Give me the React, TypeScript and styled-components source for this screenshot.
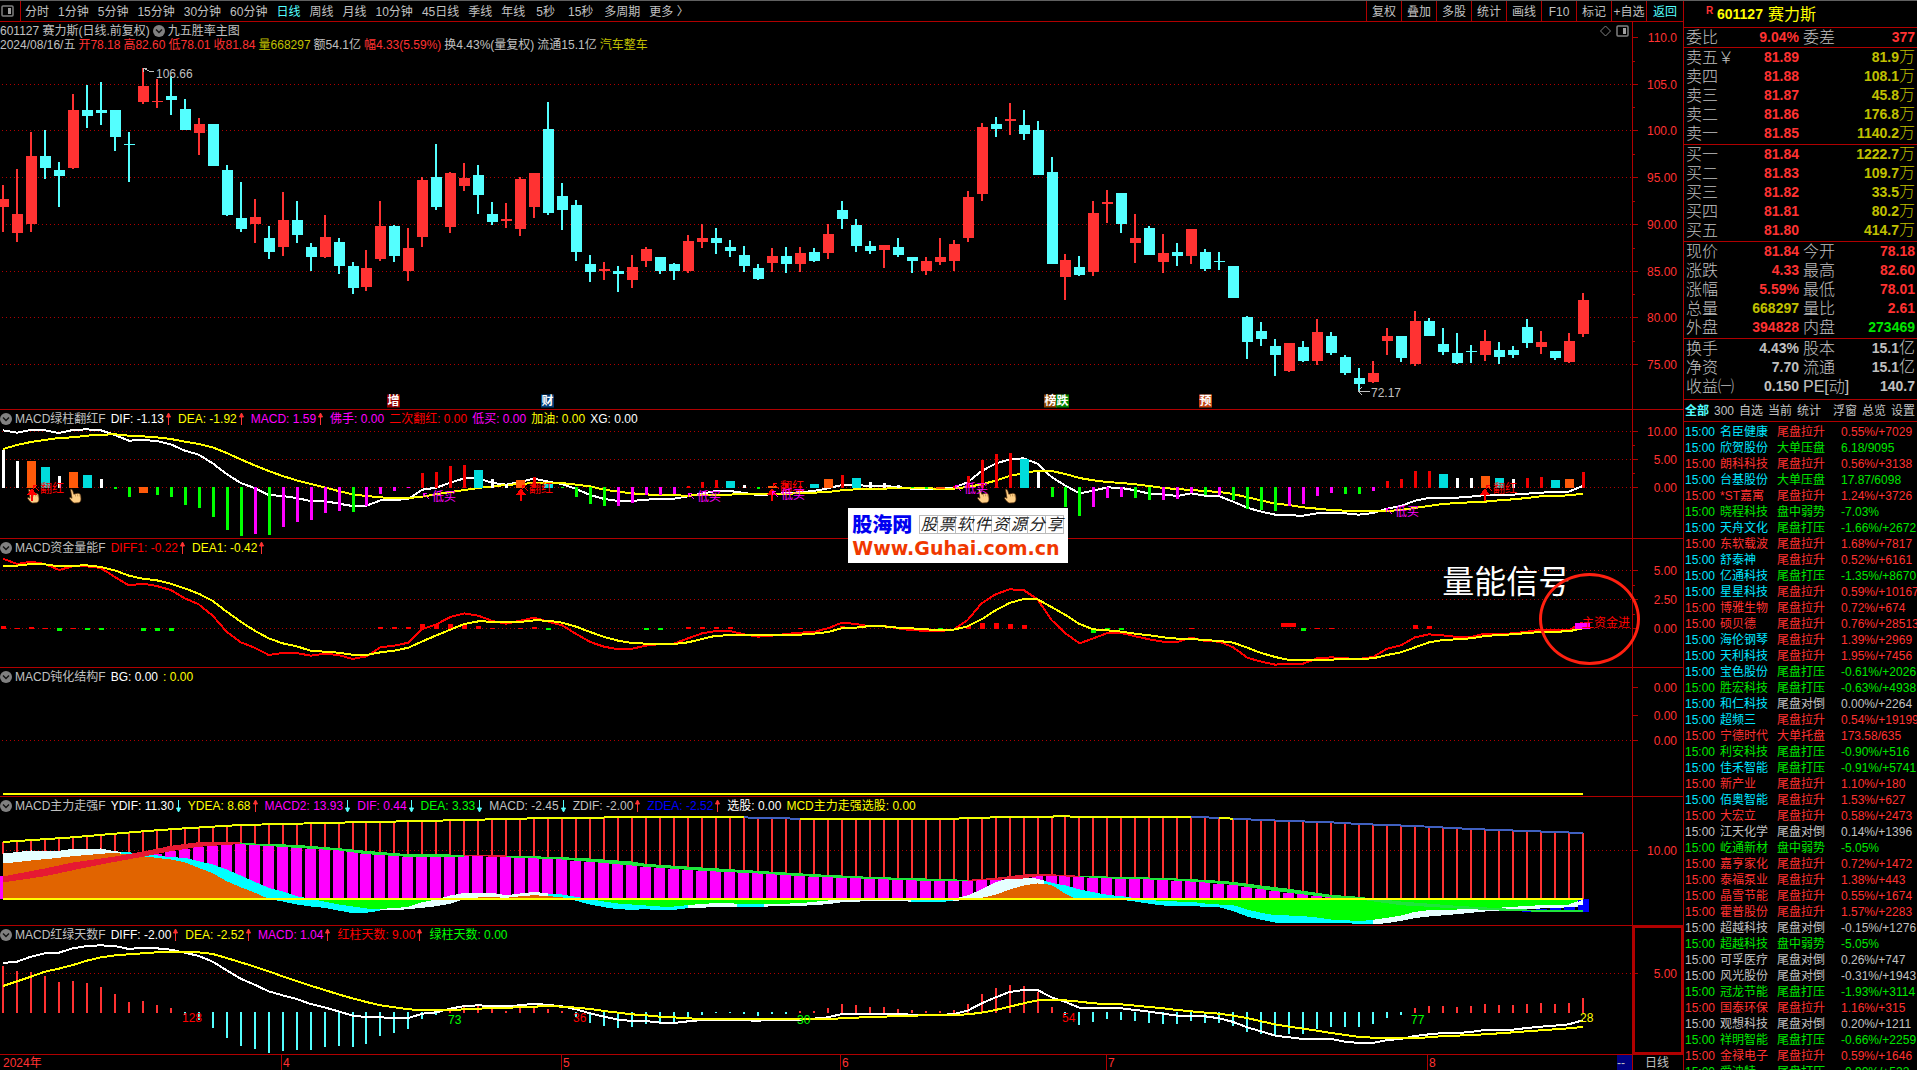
import React from 'react';
import styled, { createGlobalStyle, css } from 'styled-components';

const C = {
  line: '#b00000',
  red: '#ff3232',
  pure: '#ff0000',
  cyan: '#54ffff',
  sky: '#00e6ff',
  gray: '#c0c0c0',
  white: '#ffffff',
  yellow: '#ffff00',
  gold: '#c0c000',
  magenta: '#ff00ff',
  green: '#00ff00',
  leaf: '#00e600',
};

const sans = '"Liberation Sans", "Noto Sans CJK SC", sans-serif';

const GlobalStyle = createGlobalStyle`
  * { box-sizing: border-box; }
  body { margin: 0; background: #000; }
  button { font: inherit; color: inherit; background: none; border: 0; padding: 0; cursor: pointer; }
  table { border-collapse: collapse; border-spacing: 0; }
  td, th { padding: 0; font-weight: 400; text-align: left; }
`;

/* ---------- layout ---------- */

const Page = styled.div`
  display: flex;
  height: 100vh;
  overflow: hidden;
  border-top: 1px solid #606060;
  background: #000;
  color: ${C.gray};
  font: 12px/14px ${sans};
  white-space: nowrap;
`;
const Main = styled.main`
  flex: 1;
  min-width: 0;
  display: flex;
  flex-direction: column;
`;
const Stage = styled.div`
  position: relative;
  flex: 1;
  min-height: 0;
  display: flex;
  flex-direction: column;
`;
const Side = styled.aside`
  width: 234px;
  border-left: 1px solid ${C.line};
  display: flex;
  flex-direction: column;
  overflow: hidden;
`;

/* ---------- toolbar ---------- */

const Toolbar = styled.nav`
  height: 21px;
  flex: none;
  display: flex;
  justify-content: space-between;
  border-bottom: 1px solid ${C.line};
`;
const LayoutButton = styled.button`
  width: 21px;
  display: flex;
  align-items: center;
  padding-left: 1px;
  border-right: 1px solid ${C.line};
`;
const Periods = styled.div`
  display: flex;
  align-items: stretch;
`;
const PeriodList = styled.div`
  display: flex;
  gap: 9px;
  padding-left: 4px;
`;
const Period = styled.button<{ $active?: boolean; $pad?: boolean }>`
  padding: 1px ${(p) => (p.$pad ? 2 : 0)}px 0;
  ${(p) => p.$active && css`color: ${C.cyan};`}
`;
const Tools = styled.div`
  display: flex;
`;
const Tool = styled.button<{ $active?: boolean }>`
  width: ${(p) => (p.$active ? 37 : 35)}px;
  padding-top: 1px;
  border-left: 1px solid ${C.line};
  ${(p) => p.$active && css`color: ${C.cyan};`}
`;

/* ---------- chart panels ---------- */

const PanelBox = styled.section<{ $grow: number }>`
  flex: ${(p) => p.$grow} 1 0;
  min-height: 0;
  display: flex;
  border-bottom: 1px solid ${C.line};
`;
const PlotColumn = styled.div`
  flex: 1;
  min-width: 0;
  display: flex;
  flex-direction: column;
`;
const PanelHeader = styled.header`
  height: 17px;
  flex: none;
  display: flex;
  align-items: center;
  gap: 5px;
  overflow: hidden;
`;
const Title = styled.h2`
  margin: 0;
  display: flex;
  align-items: center;
  gap: 3px;
  font-size: 12px;
  font-weight: 400;
`;
const MainHeader = styled.header`
  height: 30px;
  flex: none;
  padding-top: 2px;
`;
const HeaderLine = styled.div`
  display: flex;
  align-items: center;
  height: 14px;
  gap: 3px;
`;
const HeaderTools = styled.div`
  margin-left: auto;
  display: flex;
  gap: 4px;
  padding-right: 3px;
`;
const Tint = styled.span<{ $c: string }>`
  color: ${(p) => p.$c};
`;
const Reading = styled.span<{ $c: string }>`
  display: flex;
  align-items: center;
  color: ${(p) => p.$c};
`;
const Plot = styled.div`
  position: relative;
  flex: 1;
  min-height: 0;
  overflow: hidden;
`;
const Canvas = styled.svg`
  display: block;
  width: 100%;
  height: 100%;
  shape-rendering: crispEdges;
`;
const Axis = styled.div<{ $active?: boolean }>`
  position: relative;
  width: 51px;
  border-left: 1px solid ${C.line};
  ${(p) => p.$active && css`box-shadow: inset 0 0 0 2px ${C.line};`}
`;
const AxisLabel = styled.span`
  position: absolute;
  right: 6px;
  transform: translateY(-50%);
  color: ${C.red};
`;
const Pin = styled.span<{ $c: string; $bg?: string }>`
  position: absolute;
  transform: translateY(-50%);
  color: ${(p) => p.$c};
  ${(p) =>
    p.$bg &&
    css`
      width: 13px;
      text-align: center;
      line-height: 13px;
      font-weight: 700;
      background: ${p.$bg};
    `}
`;

/* ---------- time axis ---------- */

const TimeBar = styled.footer`
  height: 15px;
  flex: none;
  display: flex;
`;
const Months = styled.div`
  position: relative;
  flex: 1;
  color: ${C.red};
`;
const Month = styled.span<{ $first?: boolean }>`
  position: absolute;
  top: 0;
  height: 15px;
  line-height: 17px;
  padding-left: ${(p) => (p.$first ? 3 : 1)}px;
  border-left: ${(p) => (p.$first ? 0 : 1)}px solid ${C.line};
`;
const Collapse = styled.button`
  width: 15px;
  background: #000080;
  text-align: left;
`;
const Scale = styled.div`
  width: 51px;
  border-left: 1px solid ${C.line};
  padding-left: 12px;
  line-height: 17px;
`;

/* ---------- overlays ---------- */

const Watermark = styled.div`
  position: absolute;
  left: 50.4%;
  top: 47%;
  width: 220px;
  height: 55px;
  padding: 5px 4px 0 4px;
  background: #fff;
`;
const MarkTop = styled.div`
  display: flex;
  align-items: center;
  gap: 7px;
  height: 24px;
`;
const MarkName = styled.strong`
  color: #0000f0;
  font-size: 20px;
  font-weight: 900;
  line-height: 24px;
`;
const Cells = styled.span`
  display: flex;
  border: 1px solid #bbb;
  border-right: 0;
`;
const Cell = styled.i`
  width: 18px;
  height: 17px;
  border-right: 1px solid #bbb;
  color: #222;
  font-size: 16px;
  line-height: 17px;
  text-align: center;
`;
const MarkUrl = styled.div`
  color: #f03800;
  font: bold 19px/22px "DejaVu Sans", sans-serif;
`;
const Note = styled.div`
  position: absolute;
  left: 85.7%;
  top: 54.2%;
  transform: translateY(-50%);
  color: #fff;
  font-size: 32px;
  line-height: 36px;
`;
const Ring = styled.div`
  position: absolute;
  left: 91.45%;
  top: 53.3%;
  width: 101px;
  height: 92px;
  border: 3px solid #ff2010;
  border-radius: 50%;
`;

/* ---------- quote panel ---------- */

const Symbol = styled.h1`
  margin: 0;
  height: 26px;
  flex: none;
  display: flex;
  align-items: center;
  padding: 1px 0 0 22px;
  color: ${C.yellow};
  font-size: 16px;
  font-weight: 400;
  line-height: 25px;
`;
const Flag = styled.sup`
  width: 11px;
  color: ${C.red};
  font-size: 10px;
  font-weight: 700;
  line-height: 10px;
  align-self: flex-start;
  padding-top: 4px;
`;
const Code = styled.b`
  font-size: 14px;
  margin-right: 5px;
`;
const Block = styled.div<{ $h: number }>`
  height: ${(p) => p.$h}px;
  flex: none;
  border-top: 1px solid ${C.line};
`;
const Quote = styled.table`
  width: 100%;
  table-layout: fixed;
  font-size: 16px;
  line-height: 19px;
  tr { height: 19px; }
`;
const Key = styled.th`
  padding-left: 2px;
  font-weight: 300;
`;
const Num = styled.td<{ $c: string }>`
  padding-right: 2px;
  text-align: right;
  color: ${(p) => p.$c};
  font-size: 14px;
  font-weight: 700;
  line-height: 17px;
`;
const Unit = styled.span`
  font-size: 16px;
  font-weight: 300;
  line-height: 1px;
`;
const Tabs = styled.div`
  height: 23px;
  flex: none;
  display: flex;
  gap: 5px;
  padding: 0 2px 0 1px;
  border-top: 1px solid ${C.line};
  border-bottom: 1px solid ${C.line};
`;
const Tab = styled.button<{ $active?: boolean; $gap?: boolean }>`
  ${(p) => p.$active && css`color: ${C.cyan}; font-weight: 700;`}
  ${(p) => p.$gap && css`margin-left: auto;`}
`;
const Feed = styled.div`
  flex: 1;
  min-height: 0;
  overflow: hidden;
  padding-top: 2px;
`;
const FeedTable = styled.table`
  width: 100%;
  table-layout: fixed;
  line-height: 16px;
  tr { height: 16px; }
`;
const FeedCell = styled.td<{ $c: string }>`
  padding-left: 1px;
  color: ${(p) => p.$c};
`;

/* ---------- chart data ---------- */

type Pt = [number, number];
const WIDTH = 1632;
const x = (i: number) => 3 + 13.98 * i;
const cx = (i: number) => Math.round(x(i));

// Kind, then high, body top, body bottom, low, in thirds of a pixel.
const candles = `R555 597 621 696|R507 642 699 726|R396 468 672 696|C390 468 504 537|C486 510 528 621|R282 330 504 507|C255 330 348 384|C246 330 339 375|C330 330 411 453|C396 432 435 546|R204 258 306 312|R237 303 306 324|C228 288 300 345|C297 327 390 390|R354 372 399 465|C372 372 498 498|C495 510 645 648|C546 654 687 696|R597 651 672 729|C678 714 756 777|R576 660 741 768|C603 660 705 729|C729 741 771 813|R645 711 771 774|C714 726 798 822|C786 798 864 882|R750 804 861 873|R603 678 777 783|C675 678 768 786|R684 744 813 843|R531 540 711 741|C432 531 621 630|R516 519 681 699|R489 534 558 573|C495 525 585 642|C606 642 666 675|R609 657 663 684|R531 537 687 708|R519 519 621 654|C306 387 639 645|C549 588 630 690|C600 615 756 783|C765 792 816 846|R786 807 813 840|C798 813 822 876|R765 801 840 864|R741 747 783 801|C771 771 813 822|C789 792 813 840|R705 723 813 819|R672 714 726 744|C684 714 729 762|C720 741 753 771|C738 765 798 816|C792 804 837 840|R744 768 789 816|C741 768 792 819|R741 759 792 816|C744 756 783 786|R672 702 759 777|C603 630 657 687|C657 675 738 756|C723 738 753 762|R735 735 750 804|C714 741 765 771|C771 771 783 819|R771 783 813 825|R714 771 786 795|R720 732 783 813|R573 591 714 726|R369 381 582 603|C351 372 387 411|R309 357 363 405|C330 375 402 420|C363 390 525 525|C471 516 792 792|R762 780 831 900|C768 801 825 828|R603 639 816 828|R570 606 612 669|C579 579 672 699|R642 714 729 789|C678 684 765 765|R702 759 786 819|C729 756 768 798|R687 687 768 792|C747 756 807 813|C756 783 786 810|C798 798 894 894|C948 951 1026 1077|C966 993 1017 1038|C1017 1038 1065 1128|R1029 1029 1113 1116|C1023 1041 1083 1086|R957 996 1083 1095|C996 1008 1059 1065|C1065 1071 1119 1125|C1104 1134 1152 1173|R1083 1119 1146 1149|R984 1008 1023 1065|C1008 1008 1074 1086|R933 963 1092 1098|C954 963 1008 1008|C984 1032 1056 1065|C999 1059 1089 1092|C1035 1053 1057 1089|R990 1023 1065 1083|C1026 1050 1071 1092|C1038 1050 1065 1074|C957 981 1029 1044|R993 1026 1041 1062|C1053 1053 1074 1080|R999 1023 1086 1089|R879 900 1002 1011`
  .split('|')
  .map((s) => ({ up: s[0] === 'R', v: s.slice(1).split(' ').map((n) => Math.round(+n / 3)) }));

const nums = (s: string) => s.trim().split(/\s+/).map(Number);
const pts = (s: string): Pt[] => s.trim().split(/\s+/).map((p) => p.split(':').map(Number) as Pt);

// Histogram of the first MACD panel: kind letter and the bar's far end.
const hist2 = 'W135 W168 O168 A186 W213 O201 A210 W222 G255 G279 O267 G273 G279 G303 G312 G339 G378 G396 M390 G393 M369 M354 M348 M327 M321 G324 M306 M270 M261 M252 R204 R201 R183 R180 A195 W222 W237 O225 R216 A237 G250 G279 G300 G306 M306 M297 M273 M273 M270 R243 R231 R225 A228 W240 G255 O243 R235 R243 A237 O222 R210 A219 W231 W234 W241 G250 G255 O255 R243 R213 R165 R147 R144 A162 W200 G279 G309 G336 M309 M282 M279 G282 G288 M288 M285 M267 G273 M273 G288 G315 G318 G321 M306 M300 M276 M267 G270 G270 M261 R228 R222 R198 R198 A207 W219 W219 O213 A219 W222 R219 R216 A225 O222 R201'
  .split(' ')
  .map((s) => ({ k: s[0], v: +s.slice(1) }));
const kindColor: Record<string, string> = { W: '#ffffff', O: '#ff5a0a', A: '#00dcdc', G: C.green, M: C.magenta, R: '#f00000' };

const dif2 = nums('76 83 75 76 84 75 73 76 90 107 105 108 118 137 149 175 207 234 249 270 273 279 288 288 296 303 302 286 285 282 254 248 233 220 220 234 239 230 221 230 237 252 270 282 288 288 284 282 281 274 266 258 258 264 270 268 264 262 258 250 240 240 243 243 246 251 252 251 248 232 198 176 163 160 176 216 242 265 257 247 249 256 266 268 273 265 272 274 290 308 320 329 331 332 325 324 325 329 324 311 303 287 279 279 278 275 270 270 269 266 263 261 260 243');
const dea2 = nums('132 120 111 105 99 97 92 89 88 92 94 97 102 110 117 127 144 163 181 198 213 226 237 247 258 268 273 277 280 279 275 268 261 255 249 244 240 237 234 234 234 239 244 254 260 265 268 271 271 272 270 269 269 266 266 266 266 265 263 261 256 253 252 251 249 249 249 252 251 246 238 227 213 205 197 198 207 219 226 231 234 238 243 249 252 255 258 261 267 277 286 296 300 307 311 315 317 318 318 318 315 309 303 297 294 292 290 286 283 279 274 273 271 266');
const dif3 = nums('461 477 470 477 495 484 484 489 516 541 536 543 555 580 598 632 680 712 728 750 744 744 752 746 750 762 754 727 722 713 672 658 636 625 632 648 656 647 638 650 661 687 711 725 733 731 722 717 716 700 685 678 678 688 695 692 687 683 681 670 653 657 664 663 670 676 677 678 674 645 595 568 553 555 583 645 685 715 700 684 684 694 703 710 711 698 708 710 727 758 770 779 776 776 760 757 760 762 756 731 721 697 688 691 696 696 686 688 685 680 674 674 676 652');
const dea3 = nums('484 482 477 478 484 482 481 486 496 512 521 526 536 550 566 588 620 650 677 700 715 724 737 740 743 749 750 742 737 728 709 691 674 657 649 650 652 651 646 647 653 665 681 696 707 714 716 717 717 712 702 692 691 690 690 690 690 689 686 681 670 668 663 664 668 670 673 675 674 664 643 616 594 582 583 606 630 657 673 676 680 686 691 697 701 702 705 708 713 728 744 756 765 765 765 764 762 762 760 750 742 727 712 705 703 700 693 690 688 684 681 680 679 670');
const flow3 = 'r0:663 r1:669 r2:666 r3:669 g4:678 r5:669 g6:675 g7:675 g10:678 g11:678 g12:678 r27:666 r28:666 r29:666 r30:657 r31:657 r32:657 r33:660 r34:663 r35:669 r37:669 r38:666 g39:675 g46:675 g47:675 r49:666 r50:666 r51:666 r52:666 r57:669 r60:663 g67:675 r69:663 r70:654 r71:654 r72:657 r73:660 g78:684 g79:675 g80:675 r85:669 g93:678 r94:669 r95:669 r101:660 r102:663'
  .split(' ')
  .map((s) => {
    const [i, v] = s.slice(1).split(':').map(Number);
    return { up: s[0] === 'r', i, v };
  });

const ydif5 = pts('0:156 5:142 8:131 10:124 13:115 17:105 21:101 25:97 30:93 35:88 40:83 46:82 53:82 54:84 57:86 68:86 71:82 76:79 78:82 86:82 88:86 90:90 92:93 95:97 97:102 101:108 105:117 109:123 113:129');
const deaTop5 = pts('0:260 3:236 5:218 8:200 10:185 12:168 14:157 16:156 17:158 18:161 21:165 24:175 26:183 29:193 32:194 34:195 37:198 40:202 42:206 45:215 46:222 50:233 54:243 58:253 62:261 66:266 69:270 71:264 73:254 74:252 76:255 77:258 80:261 83:264 86:270 88:276 90:287 92:297 95:315 97:321 100:335 104:348 107:355 110:361 113:362');
const deaBot5 = pts('0:277 3:258 5:240 8:215 10:200 12:183 14:170 16:164 17:162 18:165 21:173 24:181 26:192 29:200 32:200 34:198 37:203 40:208 42:215 45:226 46:230 50:242 54:250 58:260 62:266 66:272 69:272 71:269 73:265 74:258 76:259 77:261 80:266 83:269 86:277 88:284 90:297 92:308 95:322 97:328 100:345 104:355 107:361 110:365 113:366');
const upper5 = pts('0:192 2:183 4:184 5:178 7:177 8:185 10:192 12:203 13:205 14:215 15:225 16:240 17:258 18:277 19:295 20:306 21:320 22:328 24:345 25:351 26:357 27:358 28:356 29:352 30:338 31:330 32:318 33:310 35:310 36:317 37:312 38:307 39:312 40:315 41:322 42:329 43:336 44:342 45:345 46:348 47:351 48:351 49:347 50:343 51:341 52:341 53:345 55:344 57:341 58:337 59:333 60:329 64:329 65:330 66:333 67:332 68:328 69:318 70:300 71:278 72:266 73:262 74:268 75:280 76:288 77:300 78:308 79:316 80:320 81:326 82:332 83:334 84:336 85:337 86:342 87:345 88:347 89:360 90:370 91:377 92:378 93:380 94:384 95:390 96:392 97:395 98:391 99:385 100:378 101:367 102:362 104:360 106:357 108:352 110:347 112:345 113:330');
const lower5 = pts('0:219 2:210 4:202 5:197 7:190 8:187 10:197 12:207 13:215 14:232 15:248 16:272 17:290 18:306 19:325 20:333 21:342 22:348 23:352 24:360 25:368 26:367 27:360 28:359 29:356 30:352 31:347 32:340 33:325 34:321 35:320 36:322 37:317 38:314 39:317 40:320 41:331 42:342 43:350 44:356 45:358 46:356 47:360 48:358 49:353 51:350 52:348 53:350 54:350 55:347 57:346 58:344 59:341 60:335 62:332 64:331 66:336 68:332 69:327 70:322 71:313 72:297 73:285 74:279 75:283 76:310 77:330 79:328 80:328 81:333 82:340 83:345 84:347 85:345 86:350 87:350 88:362 89:378 90:388 91:396 92:399 94:396 95:396 97:400 98:401 99:398 100:391 101:383 102:378 104:371 106:363 108:358 110:354 112:352 113:348');

const hist6 = nums('528 543 546 558 576 573 579 591 612 636 633 645 654 675 690 714 744 768 777 789 783 780 780 771 768 771 762 738 729 717 687 675 654 648 645 654 663 654 648 657 663 680 699 708 714 711 702 702 699 687 675 669 669 672 678 672 672 663 663 654 642 645 651 651 657 660 663 663 660 642 612 594 585 588 606 651 675 705 696 687 690 693 699 702 702 693 699 699 708 726 732 738 731 731 716 711 710 710 701 683 674 654 648 648 651 648 642 645 645 642 639 642 639 624');
const diff6 = nums('519 515 500 490 488 475 468 466 468 477 473 475 479 488 498 515 541 566 584 604 616 627 642 652 664 677 681 682 684 684 671 667 656 648 646 648 648 646 641 645 649 658 670 680 689 693 693 698 699 694 690 689 689 691 692 690 690 689 686 682 672 671 671 671 672 674 675 675 672 662 640 622 606 600 600 622 636 653 653 653 655 660 665 671 677 677 679 685 696 712 724 737 742 747 747 747 755 759 759 750 747 738 733 729 729 726 720 720 719 714 710 707 703 691');
const dea6 = nums('588 574 560 545 536 525 512 502 496 493 490 487 486 486 487 492 504 517 530 544 559 573 587 600 613 625 636 646 652 658 660 660 660 658 656 654 653 652 650 648 650 653 657 663 668 673 676 680 682 685 687 687 687 687 687 687 687 687 687 687 685 683 681 680 678 677 676 676 675 673 668 660 650 640 631 629 631 635 640 642 643 647 651 655 660 664 668 671 677 684 694 703 710 716 722 729 735 741 743 744 744 744 742 738 737 735 733 730 727 724 721 718 715 711');

/* ---------- chart helpers ---------- */

const at = (s: Pt[], i: number) => {
  for (let k = 1; k < s.length; k++) {
    if (i <= s[k][0]) {
      const [a, b] = [s[k - 1], s[k]];
      return a[1] + ((b[1] - a[1]) * (i - a[0])) / (b[0] - a[0]);
    }
  }
  return s[s.length - 1][1];
};
const steps = (from: number, to: number) => {
  const out = [from];
  for (let i = from + 0.5; i < to; i += 0.5) out.push(i);
  out.push(to);
  return out;
};
const area = (top: (i: number) => number, bottom: (i: number) => number, base: number, from = 0, to = 113) => {
  const s = steps(from, to);
  const p = (i: number, v: number) => `${x(i).toFixed(1)},${(base + v / 3).toFixed(1)}`;
  return [...s.map((i) => p(i, top(i))), ...s.reverse().map((i) => p(i, bottom(i)))].join(' ');
};
const Curve = ({ data, base, color }: { data: number[]; base: number; color: string }) => (
  <polyline fill="none" stroke={color} strokeWidth={2} points={data.map((v, i) => `${x(i)},${base + v / 3}`).join(' ')} />
);
const Guides = ({ at: ys }: { at: number[] }) => (
  <>
    {ys.map((y) => (
      <line key={y} x1={2} x2={WIDTH} y1={y + 0.5} y2={y + 0.5} stroke={C.line} strokeDasharray="1 3" />
    ))}
  </>
);

interface PanelProps {
  top: number;
  height: number;
  head: number;
  header: React.ReactNode;
  ticks: [number, string][];
  minor?: number[];
  guides?: number[];
  active?: boolean;
  pins?: React.ReactNode;
  children: React.ReactNode;
}
const Panel = ({ top, height, head, header, ticks, minor = [], guides, active, pins, children }: PanelProps) => (
  <PanelBox $grow={height - 1}>
    <PlotColumn>
      {header}
      <Plot>
        <Canvas viewBox={`0 ${top + head} ${WIDTH} ${height - 1 - head}`} preserveAspectRatio="none">
          <Guides at={guides ?? ticks.map((t) => t[0])} />
          {children}
        </Canvas>
        {pins}
      </Plot>
    </PlotColumn>
    <Axis $active={active}>
      <Canvas viewBox={`0 ${top} 50 ${height - 1}`} preserveAspectRatio="none">
        {ticks.map(([y]) => (
          <rect key={y} x={0} y={y} width={5} height={1} fill={C.line} />
        ))}
        {minor.map((y) => (
          <rect key={y} x={0} y={y} width={2} height={1} fill={C.line} />
        ))}
      </Canvas>
      {ticks.map(([y, label]) => (
        <AxisLabel key={y} style={{ top: `${((y + 1 - top) / (height - 1)) * 100}%` }}>
          {label}
        </AxisLabel>
      ))}
    </Axis>
  </PanelBox>
);

const makePin = (top: number, h: number) =>
  ({ px, py, c, bg, children }: { px: number; py: number; c: string; bg?: string; children: React.ReactNode }) => (
    <Pin $c={c} $bg={bg} style={{ left: `${(px / WIDTH) * 100}%`, top: `${((py - top) / h) * 100}%` }}>
      {children}
    </Pin>
  );
const Pin1 = makePin(52, 357);
const Pin2 = makePin(427, 111);
const Pin3 = makePin(556, 111);
const Pin6 = makePin(943, 111);

/* ---------- icons ---------- */

const Fold = () => (
  <svg width="12" height="12" viewBox="0 0 12 12" aria-hidden>
    <circle cx="6" cy="6" r="6" fill="#808080" />
    <path d="M3 4.5 6 7.5 9 4.5" fill="none" stroke="#111" strokeWidth="1.4" />
  </svg>
);
const Dock = () => (
  <svg width="13" height="12" viewBox="0 0 13 12" aria-hidden>
    <rect x="1" y="1" width="11" height="10" rx="1" fill="none" stroke="#808080" strokeWidth="1.5" />
    <rect x="7" y="3" width="3" height="6" fill="#a0a0a0" />
  </svg>
);
const Diamond = () => (
  <svg width="13" height="12" viewBox="0 0 13 12" aria-hidden>
    <path d="M6.5 1 11.5 6 6.5 11 1.5 6Z" fill="none" stroke="#808080" />
  </svg>
);
const Trend = ({ down }: { down?: boolean }) => (
  <svg width="9" height="14" viewBox="0 0 9 14" aria-hidden>
    {down ? (
      <path d="M4.500 1V9.500M4.500 13 2.500 9H6.500Z" stroke={C.cyan} fill={C.cyan} />
    ) : (
      <path d="M4.500 13V4.500M4.500 1 2.500 5H6.500Z" stroke={C.red} fill={C.red} />
    )}
  </svg>
);
const Hand = ({ hx, hy }: { hx: number; hy: number }) => (
  <g transform={`translate(${hx} ${hy})`} shapeRendering="auto">
    <path
      d="M1.500 0.500C2.800-.300 3.600 1 4 2.500L4.800 5.200 8 4.400C10 4 11.500 5 11.700 6.800L12 10C12 12 11 13.500 9.500 13.800L5.500 14C3.500 13.500 2.500 12 .8 9.800C.2 8.800 1 8 2.200 8.800L3 9.300Z"
      fill="#ffcf86"
      stroke="#5a3410"
      strokeWidth=".7"
    />
    <path d="M6.500 5.500V7.500M8.500 5.300V7.300M10.300 5.800V7.500" stroke="#b07a38" strokeWidth=".6" />
  </g>
);
const Rise = ({ ax }: { ax: number }) => (
  <path d={`M${ax} 488L${ax + 5} 495H${ax + 1}V501H${ax - 1}V495H${ax - 5}Z`} fill={C.pure} />
);
const Pointer = ({ px, py, color }: { px: number; py: number; color: string }) => (
  <path d={`M${px + 4} ${py}H${px}V${py + 4}M${px} ${py}L${px + 6} ${py + 6}`} stroke={color} fill="none" />
);

/* ---------- header readings ---------- */

type R = [string, string, ('u' | 'd')?];
const IndicatorHeader = ({ title, items }: { title: string; items: R[] }) => (
  <PanelHeader>
    <Title>
      <Fold />
      {title}
    </Title>
    {items.map(([text, color, dir]) => (
      <Reading key={text} $c={color}>
        {text}
        {dir && <Trend down={dir === 'd'} />}
      </Reading>
    ))}
  </PanelHeader>
);

const periods = ['分时', '1分钟', '5分钟', '15分钟', '30分钟', '60分钟', '日线', '周线', '月线', '10分钟', '45日线', '季线', '年线', '5秒', '15秒', '多周期', '更多 〉'];
const tools = ['复权', '叠加', '多股', '统计', '画线', 'F10', '标记', '+自选', '返回'];

/* ---------- panels ---------- */

const PricePanel = () => (
  <Panel
    top={22}
    height={388}
    head={30}
    ticks={[[37, '110.0'], [84, '105.0'], [130, '100.0'], [177, '95.00'], [224, '90.00'], [271, '85.00'], [317, '80.00'], [364, '75.00']]}
    minor={[61, 107, 154, 201, 248, 294, 341]}
    guides={[84, 130, 177, 224, 271, 317, 364]}
    header={
      <MainHeader>
        <HeaderLine>
          <span>601127 赛力斯(日线.前复权)</span>
          <Fold />
          <span>九五胜率主图</span>
          <HeaderTools>
            <Diamond />
            <Dock />
          </HeaderTools>
        </HeaderLine>
        <HeaderLine>
          <span>2024/08/16/五</span>
          <Tint $c={C.red}>开78.18</Tint>
          <Tint $c={C.red}>高82.60</Tint>
          <Tint $c={C.red}>低78.01</Tint>
          <Tint $c={C.red}>收81.84</Tint>
          <Tint $c={C.gold}>量668297</Tint>
          <span>额54.1亿</span>
          <Tint $c={C.red}>幅4.33(5.59%)</Tint>
          <span>换4.43%(量复权)</span>
          <span>流通15.1亿</span>
          <Tint $c={C.gold}>汽车整车</Tint>
        </HeaderLine>
      </MainHeader>
    }
    pins={
      <>
        <Pin1 px={156} py={74} c={C.gray}>106.66</Pin1>
        <Pin1 px={1371} py={393} c={C.gray}>72.17</Pin1>
        <Pin1 px={387} py={401} c="#fff" bg="#900000">增</Pin1>
        <Pin1 px={541} py={401} c="#fff" bg="#003c78">财</Pin1>
        <Pin1 px={1044} py={401} c="#fff" bg="#884400">榜</Pin1>
        <Pin1 px={1056} py={401} c="#fff" bg="#008000">跌</Pin1>
        <Pin1 px={1199} py={401} c="#fff" bg="#c04010">预</Pin1>
      </>
    }
  >
    {candles.map(({ up, v: [hi, t, b, lo] }, i) => (
      <g key={i} fill={up ? C.red : C.cyan}>
        <rect x={cx(i) - 1} y={hi} width={2} height={lo - hi} />
        <rect x={cx(i) - 5} y={t} width={11} height={Math.max(1, b - t)} />
      </g>
    ))}
    <path d="M147 68H143V72M143 68 149 71H154" stroke={C.gray} fill="none" />
    <path d="M1370 391H1358M1362 387 1358 391 1362 395" stroke={C.gray} fill="none" />
  </Panel>
);

const RED_TAGS: Pt[] = [[40, 489], [529, 489], [780, 487], [1493, 489]];
const BUY_TAGS: Pt[] = [[432, 497], [697, 497], [781, 495], [964, 489], [1395, 512]];

const TurnPanel = () => (
  <Panel
    top={410}
    height={129}
    head={17}
    ticks={[[431, '10.00'], [459, '5.00'], [487, '0.00']]}
    minor={[445, 473]}
    header={
      <IndicatorHeader
        title="MACD绿柱翻红F"
        items={[['DIF: -1.13', C.white, 'u'], ['DEA: -1.92', C.yellow, 'u'], ['MACD: 1.59', C.magenta, 'u'], ['佛手: 0.00', C.magenta], ['二次翻红: 0.00', C.pure], ['低买: 0.00', C.magenta], ['加油: 0.00', C.yellow], ['XG: 0.00', C.white]]}
      />
    }
    pins={
      <>
        {RED_TAGS.map(([a, b]) => <Pin2 key={a} px={a} py={b} c={C.pure}>翻红</Pin2>)}
        {BUY_TAGS.map(([a, b]) => <Pin2 key={a} px={a} py={b} c={C.magenta}>低买</Pin2>)}
      </>
    }
  >
    <Curve data={dif2} base={405} color={C.white} />
    <Curve data={dea2} base={405} color={C.yellow} />
    {hist2.map(({ k, v }, i) => {
      const w = k === 'O' || k === 'A' ? 9 : 3;
      const y = 405 + Math.round(v / 3);
      return <rect key={i} x={cx(i) - (w - 1) / 2} y={Math.min(y, 487)} width={w} height={Math.max(1, Math.abs(488 - y))} fill={kindColor[k]} />;
    })}
    {[27, 69, 977, 1004].map((hx) => <Hand key={hx} hx={hx} hy={489} />)}
    {[32, 521, 772, 1485].map((ax) => <Rise key={ax} ax={ax} />)}
    {RED_TAGS.map(([a, b]) => <Pointer key={a} px={a - 7} py={b - 4} color={C.pure} />)}
    {BUY_TAGS.map(([a, b]) => <Pointer key={a} px={a - 9} py={b - 4} color={C.magenta} />)}
  </Panel>
);

const FundPanel = () => (
  <Panel
    top={539}
    height={129}
    head={17}
    ticks={[[570, '5.00'], [599, '2.50'], [628, '0.00']]}
    minor={[585, 614]}
    header={<IndicatorHeader title="MACD资金量能F" items={[['DIFF1: -0.22', C.pure, 'u'], ['DEA1: -0.42', C.yellow, 'u']]} />}
    pins={<Pin3 px={1582} py={623} c={C.pure}>主资金进</Pin3>}
  >
    {flow3.map(({ up, i, v }) => {
      const y = 405 + Math.round(v / 3);
      return <rect key={i} x={cx(i) - 2} y={up ? y : 628} width={5} height={up ? 629 - y : y - 628} fill={up ? C.pure : C.green} />;
    })}
    <rect x={1281} y={623} width={15} height={4} fill={C.pure} />
    <Curve data={dif3} base={405} color={C.pure} />
    <Curve data={dea3} base={405} color={C.yellow} />
    <rect x={1575} y={623} width={15} height={6} fill={C.magenta} />
  </Panel>
);

const ShapePanel = () => (
  <Panel
    top={668}
    height={129}
    head={17}
    ticks={[[687, '0.00'], [715, '0.00'], [740, '0.00']]}
    guides={[740]}
    header={<IndicatorHeader title="MACD钝化结构F" items={[['BG: 0.00', C.white], [': 0.00', C.yellow]]} />}
  >
    <rect x={3} y={793} width={1580} height={2} fill={C.yellow} />
  </Panel>
);

const ZERO5 = 326;
const deaSegs: [number, number, string][] = [[0, 17, '#e61932'], [17, 33, '#1ee63c'], [33, 36, '#e61932'], [36, 69, '#1ee63c'], [69, 77, '#e61932'], [77, 113, '#1ee63c']];
const difSegs: [number, number, string][] = [[0, 8.5, '#e6ffff'], [8.5, 27, '#00ffff'], [27, 39, '#e6ffff'], [39, 49, '#00ffff'], [49, 52.5, '#e6ffff'], [52.5, 54.5, '#00ffff'], [54.5, 65, '#e6ffff'], [65, 68, '#00ffff'], [68, 74.5, '#e6ffff'], [74.5, 98, '#00ffff'], [98, 113, '#e6ffff']];
const ydifSegs: [number, number, string][] = [[0, 53, '#f0ff00'], [53, 57, '#4060c0'], [57, 85, '#f0ff00'], [85, 87, '#4060c0'], [87, 88, '#f0ff00'], [88, 113, '#4060c0']];
const all = Array.from({ length: 114 }, (_, i) => i);

const TrendPanel = () => {
  const base = 790;
  const Y = (v: number) => Math.round(base + v / 3);
  const up = (i: number) => at(upper5, i);
  const low = (i: number) => at(lower5, i);
  return (
    <Panel
      top={797}
      height={129}
      head={17}
      ticks={[[850, '10.00']]}
      header={
        <IndicatorHeader
          title="MACD主力走强F"
          items={[['YDIF: 11.30', C.white, 'd'], ['YDEA: 8.68', C.yellow, 'u'], ['MACD2: 13.93', C.magenta, 'd'], ['DIF: 0.44', C.magenta, 'd'], ['DEA: 3.33', C.green, 'd'], ['MACD: -2.45', C.gray, 'd'], ['ZDIF: -2.00', C.gray, 'u'], ['ZDEA: -2.52', '#0000ff', 'u'], ['选股: 0.00', C.white], ['MCD主力走强选股: 0.00', C.yellow]]}
        />
      }
    >
      {all.map((i) => {
        const t = Y(at(ydif5, i));
        const b = Y(Math.min(ZERO5, at(deaTop5, i), up(i)));
        return <rect key={i} x={cx(i) - 1} y={t} width={2} height={b - t} fill={C.red} />;
      })}
      <rect x={0} y={876} width={3} height={23} fill={C.magenta} />
      {all.filter((i) => i >= 9 && i <= 95).map((i) => (
        <rect key={i} x={cx(i) - 6} y={Y(at(deaBot5, i))} width={11} height={Math.max(0, Y(ZERO5) - Y(at(deaBot5, i)))} fill={C.magenta} />
      ))}
      <polygon fill="#e16400" points={area((i) => Math.min(ZERO5, low(i)), () => ZERO5, base)} />
      <polygon fill={C.green} points={area(() => ZERO5, (i) => Math.max(ZERO5, up(i)), base)} />
      {difSegs.map(([a, b, c]) => <polygon key={a} fill={c} stroke={c} strokeWidth={1} points={area(up, low, base, a, b)} />)}
      {[360, 357, 355, 350, 327].map((v, k) => {
        const i = 109 + k;
        return <rect key={i} x={cx(i) - 5} y={Y(v)} width={11} height={Y(365) - Y(v)} fill="#0000ff" />;
      })}
      <polygon fill="#e6ffff" points={area(up, (i) => low(i) - 4, base, 108, 113)} />
      {deaSegs.map(([a, b, c]) => (
        <polygon key={a} fill={c} stroke={c} strokeWidth={1} points={area((i) => at(deaTop5, i) + 1, (i) => at(deaBot5, i) - 1, base, a, b)} />
      ))}
      {ydifSegs.map(([a, b, c]) => (
        <polyline key={a} fill="none" stroke={c} strokeWidth={2} points={steps(a, b).map((i) => `${x(i)},${base + at(ydif5, i) / 3}`).join(' ')} />
      ))}
      <rect x={3} y={898} width={1580} height={2} fill={C.yellow} />
    </Panel>
  );
};

const DaysPanel = () => (
  <Panel
    top={926}
    height={129}
    head={17}
    active
    ticks={[[973, '5.00']]}
    header={
      <IndicatorHeader
        title="MACD红绿天数F"
        items={[['DIFF: -2.00', C.white, 'u'], ['DEA: -2.52', C.yellow, 'u'], ['MACD: 1.04', C.magenta, 'u'], ['红柱天数: 9.00', C.pure, 'u'], ['绿柱天数: 0.00', C.green]]}
      />
    }
    pins={
      <>
        <Pin6 px={182} py={1018} c={C.pure}>128</Pin6>
        <Pin6 px={448} py={1020} c={C.green}>73</Pin6>
        <Pin6 px={573} py={1018} c={C.pure}>36</Pin6>
        <Pin6 px={797} py={1020} c={C.green}>30</Pin6>
        <Pin6 px={1062} py={1018} c={C.pure}>54</Pin6>
        <Pin6 px={1411} py={1020} c={C.green}>77</Pin6>
        <Pin6 px={1580} py={1018} c={C.yellow}>28</Pin6>
      </>
    }
  >
    {hist6.map((v, i) => {
      const y = 790 + Math.round(v / 3);
      const up = v < 667;
      return <rect key={i} x={cx(i) - 1} y={up ? y : 1012} width={2} height={up ? 1013 - y : Math.max(1, y - 1012)} fill={up ? C.red : C.cyan} />;
    })}
    <Curve data={diff6} base={790} color={C.white} />
    <Curve data={dea6} base={790} color={C.yellow} />
  </Panel>
);

/* ---------- side data ---------- */

type Q = [string, string, string];
const QuoteBook = ({ rows, h, label }: { rows: Q[]; h: number; label: string }) => (
  <Block $h={h}>
    <Quote aria-label={label}>
      <colgroup>
        <col style={{ width: 56 }} />
        <col style={{ width: 61 }} />
        <col />
      </colgroup>
      <tbody>
        {rows.map(([k, price, vol]) => (
          <tr key={k}>
            <Key scope="row">{k}</Key>
            <Num $c={C.red}>{price}</Num>
            <Num $c={C.gold}>
              {vol}
              <Unit>万</Unit>
            </Num>
          </tr>
        ))}
      </tbody>
    </Quote>
  </Block>
);

const asks: Q[] = [['卖五￥', '81.89', '81.9'], ['卖四', '81.88', '108.1'], ['卖三', '81.87', '45.8'], ['卖二', '81.86', '176.8'], ['卖一', '81.85', '1140.2']];
const bids: Q[] = [['买一', '81.84', '1222.7'], ['买二', '81.83', '109.7'], ['买三', '81.82', '33.5'], ['买四', '81.81', '80.2'], ['买五', '81.80', '414.7']];

type Pair = [string, string, string, string, string, string, string?];
const Stats = ({ rows, h, label }: { rows: Pair[]; h: number; label: string }) => (
  <Block $h={h}>
    <Quote aria-label={label}>
      <colgroup>
        <col style={{ width: 50 }} />
        <col style={{ width: 67 }} />
        <col style={{ width: 50 }} />
        <col />
      </colgroup>
      <tbody>
        {rows.map(([k1, v1, c1, k2, v2, c2, unit]) => (
          <tr key={k1}>
            <Key scope="row">{k1}</Key>
            <Num $c={c1}>{v1}</Num>
            <Key>{k2}</Key>
            <Num $c={c2}>
              {v2}
              {unit && <Unit>{unit}</Unit>}
            </Num>
          </tr>
        ))}
      </tbody>
    </Quote>
  </Block>
);

const tone: Record<string, string> = { c: C.sky, r: C.red, g: C.leaf, w: C.gray };
const event: Record<string, string> = { U: '尾盘拉升', D: '尾盘打压', X: '尾盘对倒', P: '大单压盘', T: '大单托盘', L: '盘中弱势' };
const feed = `c名臣健康 rU 0.55%/+7029|c欣贺股份 gP 6.18/9095|r朗科科技 rU 0.56%/+3138|c台基股份 gP 17.87/6098|r*ST嘉寓 rU 1.24%/+3726|g晓程科技 gL -7.03%|c天舟文化 gD -1.66%/+2672|r东软载波 rU 1.68%/+7817|c舒泰神 rU 0.52%/+6161|c亿通科技 gD -1.35%/+8670|c星星科技 rU 0.59%/+10167|r博雅生物 rU 0.72%/+674|r硕贝德 rU 0.76%/+28513|c海伦钢琴 rU 1.39%/+2969|c天利科技 rU 1.95%/+7456|c宝色股份 gD -0.61%/+2026|g胜宏科技 gD -0.63%/+4938|c和仁科技 wX 0.00%/+2264|c超频三 rU 0.54%/+19199|r宁德时代 rT 173.58/635|g利安科技 gD -0.90%/+516|c佳禾智能 gD -0.91%/+5741|r新产业 rU 1.10%/+180|c佰奥智能 rU 1.53%/+627|r大宏立 rU 0.58%/+2473|w江天化学 wX 0.14%/+1396|g屹通新材 gL -5.05%|r嘉亨家化 rU 0.72%/+1472|r泰福泵业 rU 1.38%/+443|r晶雪节能 rU 0.55%/+1674|r霍普股份 rU 1.57%/+2283|w超越科技 wX -0.15%/+1276|g超越科技 gL -5.05%|w可孚医疗 wX 0.26%/+747|w风光股份 wX -0.31%/+1943|g冠龙节能 gD -1.93%/+3114|r国泰环保 rU 1.16%/+315|w观想科技 wX 0.20%/+1211|g祥明智能 gD -0.66%/+2259|r金禄电子 rU 0.59%/+1646|g爱迪特 gD -0.90%/+522`
  .split('|')
  .map((s) => s.split(' '));

const months: [number, string][] = [[281, '4'], [561, '5'], [840, '6'], [1106, '7'], [1427, '8']];

export default function App() {
  return (
    <Page>
      <GlobalStyle />
      <Main>
        <Toolbar>
          <Periods>
            <LayoutButton aria-label="布局">
              <Dock />
            </LayoutButton>
            <PeriodList>
              {periods.map((p) => (
                <Period key={p} $active={p === '日线'} $pad={p.endsWith('秒')}>{p}</Period>
              ))}
            </PeriodList>
          </Periods>
          <Tools>
            {tools.map((t) => (
              <Tool key={t} $active={t === '返回'}>{t}</Tool>
            ))}
          </Tools>
        </Toolbar>
        <Stage>
          <PricePanel />
          <TurnPanel />
          <FundPanel />
          <ShapePanel />
          <TrendPanel />
          <DaysPanel />
          <Watermark>
            <MarkTop>
              <MarkName>股海网</MarkName>
              <Cells>
                {[...'股票软件资源分享'].map((ch) => <Cell key={ch}>{ch}</Cell>)}
              </Cells>
            </MarkTop>
            <MarkUrl>Www.Guhai.com.cn</MarkUrl>
          </Watermark>
          <Note>量能信号</Note>
          <Ring />
        </Stage>
        <TimeBar>
          <Months>
            <Month $first>2024年</Month>
            {months.map(([mx, m]) => (
              <Month key={m} style={{ left: `${(mx / 1617) * 100}%` }}>{m}</Month>
            ))}
          </Months>
          <Collapse>--</Collapse>
          <Scale>日线</Scale>
        </TimeBar>
      </Main>
      <Side>
        <Symbol>
          <Flag>R</Flag>
          <Code>601127</Code>赛力斯
        </Symbol>
        <Stats label="委比" h={20} rows={[['委比', '9.04%', C.red, '委差', '377', C.red]]} />
        <QuoteBook label="卖盘" h={97} rows={asks} />
        <QuoteBook label="买盘" h={97} rows={bids} />
        <Stats
          label="行情"
          h={97}
          rows={[
            ['现价', '81.84', C.red, '今开', '78.18', C.red],
            ['涨跌', '4.33', C.red, '最高', '82.60', C.red],
            ['涨幅', '5.59%', C.red, '最低', '78.01', C.red],
            ['总量', '668297', C.gold, '量比', '2.61', C.red],
            ['外盘', '394828', C.red, '内盘', '273469', C.leaf],
          ]}
        />
        <Stats
          label="财务"
          h={61}
          rows={[
            ['换手', '4.43%', C.gray, '股本', '15.1', C.gray, '亿'],
            ['净资', '7.70', C.gray, '流通', '15.1', C.gray, '亿'],
            ['收益㈠', '0.150', C.gray, 'PE[动]', '140.7', C.gray],
          ]}
        />
        <Tabs>
          <Tab $active>全部</Tab>
          <Tab>300</Tab>
          <Tab>自选</Tab>
          <Tab>当前</Tab>
          <Tab>统计</Tab>
          <Tab $gap>浮窗</Tab>
          <Tab>总览</Tab>
          <Tab>设置</Tab>
        </Tabs>
        <Feed>
          <FeedTable aria-label="异动">
            <colgroup>
              <col style={{ width: 35 }} />
              <col style={{ width: 57 }} />
              <col style={{ width: 64 }} />
              <col />
            </colgroup>
            <tbody>
              {feed.map(([name, kind, value], i) => (
                <tr key={i}>
                  <FeedCell $c={tone[name[0]]}>15:00</FeedCell>
                  <FeedCell $c={tone[name[0]]}>{name.slice(1)}</FeedCell>
                  <FeedCell $c={tone[kind[0]]}>{event[kind[1]]}</FeedCell>
                  <FeedCell $c={tone[kind[0]]}>{value}</FeedCell>
                </tr>
              ))}
            </tbody>
          </FeedTable>
        </Feed>
      </Side>
    </Page>
  );
}
